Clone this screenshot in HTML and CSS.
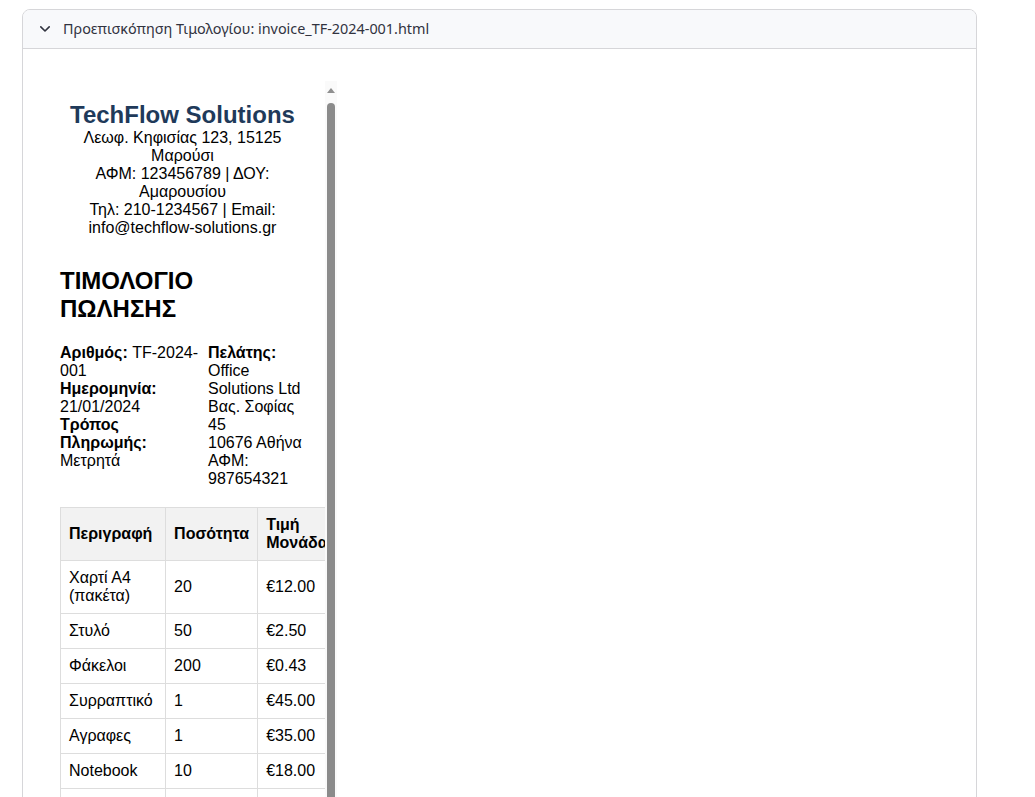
FILE: index.html
```html
<!DOCTYPE html>
<html lang="el">
<head>
<meta charset="utf-8">
<title>Προεπισκόπηση Τιμολογίου</title>
<link rel="stylesheet" href="styles.css">
</head>
<body>
<div class="expander">
  <div class="exp-header">
    <svg class="chev" width="16" height="16" viewBox="0 0 16 16"><path d="M3.8 5.9 L8 10 L12.2 5.9" fill="none" stroke="#31333f" stroke-width="1.6" stroke-linecap="round" stroke-linejoin="round"/></svg>
    <span class="exp-title">Προεπισκόπηση Τιμολογίου: invoice_TF-2024-001.html</span>
  </div>
  <div class="exp-body">
    <div class="frame-wrap">
      <div class="frame">
        <div class="invoice">
          <div class="company">
            <h1 class="company-name">TechFlow Solutions</h1>
            <div class="company-line">Λεωφ. Κηφισίας 123, 15125 Μαρούσι</div>
            <div class="company-line">ΑΦΜ: 123456789 | ΔΟΥ: Αμαρουσίου</div>
            <div class="company-line">Τηλ: 210-1234567 | Email: info@techflow-solutions.gr</div>
          </div>
          <h2 class="doc-title">ΤΙΜΟΛΟΓΙΟ ΠΩΛΗΣΗΣ</h2>
          <div class="info">
            <div class="info-col">
              <strong>Αριθμός:</strong> TF-2024-001<br>
              <strong>Ημερομηνία:</strong> 21/01/2024<br>
              <strong>Τρόπος Πληρωμής:</strong> Μετρητά
            </div>
            <div class="info-col">
              <strong>Πελάτης:</strong><br>
              Office Solutions Ltd<br>
              Βας. Σοφίας 45<br>
              10676 Αθήνα<br>
              ΑΦΜ: 987654321
            </div>
          </div>
          <table class="items">
            <thead>
              <tr><th>Περιγραφή</th><th>Ποσότητα</th><th>Τιμή Μονάδας</th><th>Σύνολο</th></tr>
            </thead>
            <tbody>
              <tr><td>Χαρτί Α4 (πακέτα)</td><td>20</td><td>€12.00</td><td>€240.00</td></tr>
              <tr><td>Στυλό</td><td>50</td><td>€2.50</td><td>€125.00</td></tr>
              <tr><td>Φάκελοι</td><td>200</td><td>€0.43</td><td>€86.00</td></tr>
              <tr><td>Συρραπτικό</td><td>1</td><td>€45.00</td><td>€45.00</td></tr>
              <tr><td>Αγραφες</td><td>1</td><td>€35.00</td><td>€35.00</td></tr>
              <tr><td>Notebook</td><td>10</td><td>€18.00</td><td>€180.00</td></tr>
              <tr><td>Μαρκαδόροι</td><td>5</td><td>€1.20</td><td>€6.00</td></tr>
            </tbody>
          </table>
          <div class="totals">
            <div>Καθαρή Αξία: €717.00</div>
            <div>ΦΠΑ 24%: €172.08</div>
            <div class="grand">Σύνολο: €889.08</div>
          </div>
        </div>
      </div>
      <div class="vscroll">
        <div class="vscroll-arrow"></div>
        <div class="vscroll-thumb"></div>
      </div>
    </div>
  </div>
</div>
</body>
</html>
```

FILE: styles.css
```css
html, body {
  margin: 0;
  padding: 0;
  background: #ffffff;
}

body {
  padding: 9px 58px 0 22px;
  font-family: "Noto Sans", "Open Sans", sans-serif;
  color: #31333f;
  height: 797px;
  box-sizing: border-box;
  overflow: hidden;
}

.expander {
  border: 1px solid #d6d6d9;
  border-radius: 8px;
  overflow: hidden;
  height: 900px;
}

.exp-header {
  display: flex;
  align-items: center;
  height: 38px;
  padding: 0 0 0 14px;
  background: #f8f9fb;
  border-bottom: 1px solid #d6d6d9;
  font-size: 14.4px;
  gap: 10px;
}

.chev {
  display: block;
  flex: none;
  margin-top: -1px;
}

.exp-title {
  color: #31333f;
  margin-top: -1px;
}

.exp-body {
  padding: 32px 0 0 17px;
}

.frame-wrap {
  display: flex;
  width: 297px;
  height: 900px;
}

.frame {
  width: 285px;
  flex: none;
  overflow: hidden;
  background: #ffffff;
}

.vscroll {
  width: 12px;
  flex: none;
  display: flex;
  flex-direction: column;
  align-items: center;
  padding-top: 7px;
  box-sizing: border-box;
  background: #fafafa;
}

.vscroll-arrow {
  width: 0;
  height: 0;
  border-left: 4px solid transparent;
  border-right: 4px solid transparent;
  border-bottom: 5px solid #8f8f8f;
  margin-bottom: 10px;
}

.vscroll-thumb {
  width: 8px;
  flex: 1;
  background: #8b8b8b;
  border-radius: 4px 4px 0 0;
}

.invoice {
  padding: 20px;
  font-family: "Liberation Sans", Arial, sans-serif;
  font-size: 16px;
  color: #000000;
}

.company {
  text-align: center;
  margin-bottom: 30px;
}

.company-name {
  margin: 0;
  font-size: 24px;
  font-weight: bold;
  color: #1f3a5a;
}

.doc-title {
  margin: 0 0 21px;
  font-size: 24px;
  font-weight: bold;
}

.info {
  display: grid;
  grid-template-columns: 140px 1fr;
  column-gap: 8px;
  margin-bottom: 19px;
}

.items {
  width: 100%;
  border-collapse: collapse;
  margin-bottom: 20px;
}

.items th,
.items td {
  border: 1px solid #dddddd;
  padding: 8px;
  text-align: left;
}

.items th {
  background: #f2f2f2;
  font-weight: bold;
}

.totals {
  text-align: right;
}

.grand {
  font-weight: bold;
  font-size: 18px;
}
```
